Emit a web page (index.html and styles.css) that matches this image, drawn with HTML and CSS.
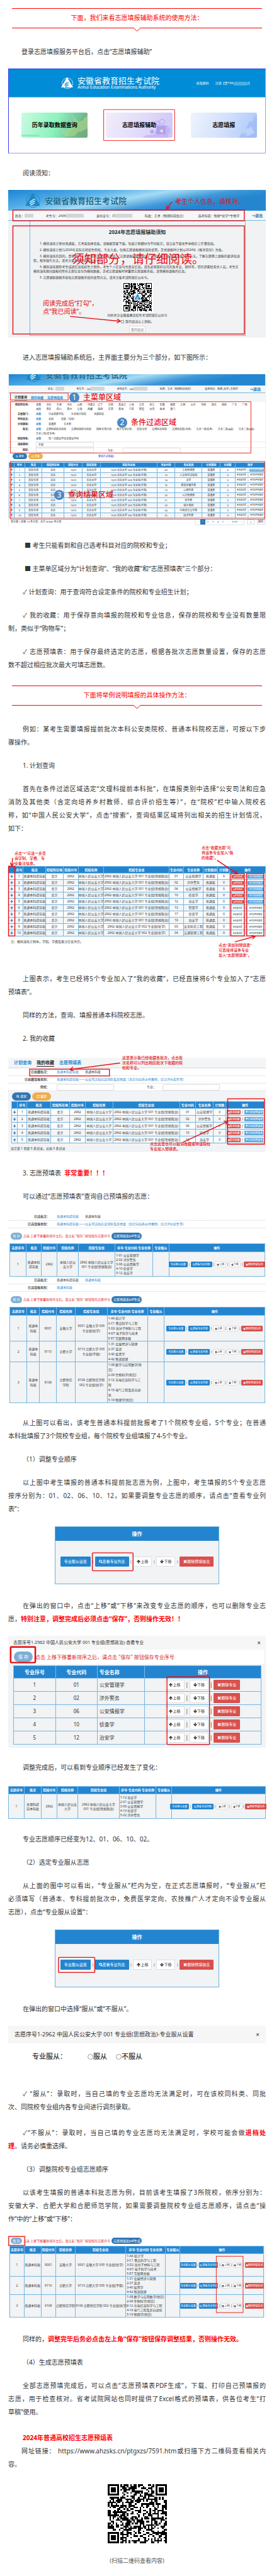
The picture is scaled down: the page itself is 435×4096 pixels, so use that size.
FILE: index.html
```html
<!DOCTYPE html>
<html lang="zh-CN">
<head>
    <meta charset="UTF-8">
    <meta name="viewport" content="width=device-width, initial-scale=1.0">
    <title>志愿填报辅助系统使用方法</title>
    <link rel="stylesheet" href="styles.css">
</head>
<body>
    <svg class="defs" width="0" height="0" aria-hidden="true">
        <symbol id="logo" viewBox="0 0 40 40">
            <circle cx="21" cy="21" r="17" fill="none" stroke="currentColor" stroke-width="1.5"/>
            <path d="M20 1 39 34H1Z" fill="currentColor" stroke="none"/>
            <path d="M12 24c5 0 6-7 14-7M12 28c6 0 7-6 14-6M14 32c5 0 6-5 11-5" fill="none" stroke-width="2.4"/>
        </symbol>
        <symbol id="chevron" viewBox="0 0 11 6">
            <path d="M0 .5 5.5 5.5 11 .5" fill="none" stroke="#ff0000"/>
        </symbol>
        <symbol id="up" viewBox="0 0 10 10"><path d="M5 0 10 5.5 8.6 7 6.2 4.6V10H3.8V4.6L1.4 7 0 5.5Z" fill="currentColor"/></symbol>
        <symbol id="down" viewBox="0 0 10 10"><path d="M5 10 0 4.5 1.4 3l2.4 2.4V0h2.4v5.4L8.6 3 10 4.5Z" fill="currentColor"/></symbol>
        <symbol id="search" viewBox="0 0 10 10"><circle cx="4" cy="4" r="3" fill="none" stroke="currentColor" stroke-width="1.8"/><path d="m6.2 6.2 3 3" stroke="currentColor" stroke-width="2"/></symbol>
        <symbol id="refresh" viewBox="0 0 10 10"><path d="M1 4.4A4 4 0 0 1 8 2.4M9 5.6A4 4 0 0 1 2 7.6" fill="none" stroke="currentColor" stroke-width="1.5"/><path d="M9.5.5v3.6H6ZM.5 9.5V5.9H4Z" fill="currentColor"/></symbol>
        <symbol id="cross" viewBox="0 0 10 10"><path d="m1.5 1.5 7 7m0-7-7 7" stroke="currentColor" stroke-width="3"/></symbol>
        <marker id="head" viewBox="0 0 10 10" refX="8" refY="5" markerWidth="5" markerHeight="5" orient="auto">
            <path d="M1 0 9 5 1 10" fill="none" stroke="#e60d12" stroke-width="2"/>
        </marker>
    </svg>

    <main class="article">
        <header class="divider">
            <h2>下面，我们来看志愿填报辅助系统的使用方法：</h2>
            <div class="divider-foot"><i></i><svg><use href="#chevron"/></svg><i></i></div>
        </header>

        <p class="near">登录志愿填报服务平台后，点击“志愿填报辅助”</p>

        <!-- platform home -->
        <figure class="shot portal">
            <div class="portal-head">
                <svg class="portal-logo"><use href="#logo"/></svg>
                <div class="portal-name">
                    <strong>安徽省教育招生考试院</strong>
                    <span>Anhui Education Examinations Authority</span>
                </div>
                <nav><a href="#">修改密码</a><a href="#">注销【贾*34<i class="smudge"></i>】</a></nav>
            </div>
            <div class="portal-cards">
                <button class="card green" type="button">
                    <svg viewBox="0 0 105 41" preserveAspectRatio="none"><path d="M105 0v41H70c8-3 3-9 10-13s6-14 12-16 2-8 13-12Z" fill="#7fae78" opacity=".5"/><path d="M80 0c2 8 8 14 13 14s5-6 12-9v20c-9 8-17 3-20 13-12 3-20 0-22-8 9 0 15-5 20-12Z" fill="#a9d98a" opacity=".6"/><path d="M0 36h28v3H0Z" fill="#7ce0ae" opacity=".6"/></svg>
                    <span>历年录取数据查询</span>
                </button>
                <button class="card violet" type="button">
                    <svg viewBox="0 0 105 41" preserveAspectRatio="none"><path d="M58 41l6-4 12-1 6-14 16-1 5 8-6 12Z" fill="#b9aaf0" opacity=".6"/><rect x="80" y="21" width="15" height="14" rx="1" fill="#a895e8" opacity=".7"/><path d="m85 30 5-3v6Z" fill="#f3ecc9"/><circle cx="89" cy="15" r="4" fill="none" stroke="#c4b4ee" stroke-width="2"/><circle cx="82" cy="17" r="3" fill="none" stroke="#c4b4ee" stroke-width="2"/><circle cx="73" cy="31" r="3" fill="#9f90d8" opacity=".6"/></svg>
                    <span>志愿填报辅助</span>
                </button>
                <button class="card blue" type="button">
                    <svg viewBox="0 0 105 41" preserveAspectRatio="none"><path d="m76 41 4-7 5 1 2-9 6-12 4 2 3-9 5-2v36Z" fill="#98b8f4" opacity=".6"/><path d="m84 28 12-5 5 10-12 6Z" fill="#bcd2fb"/></svg>
                    <span>志愿填报</span>
                </button>
            </div>
            <svg class="marks" viewBox="46 405 1473 503" preserveAspectRatio="none"><rect x="591" y="648" width="408" height="186" rx="3"/></svg>
        </figure>

        <p>阅读须知：</p>

        <!-- notice page -->
        <figure class="shot notice">
            <div class="banner">
                <svg class="banner-logo"><use href="#logo"/></svg>
                <strong>安徽省教育招生考试院</strong>
            </div>
            <div class="info">
                <span>姓名：<i class="smudge"></i></span>
                <span>考生号：2434<i class="smudge wide"></i></span>
                <span>身份证号：3<i class="smudge wide"></i></span>
                <span>科类：艺术（物理科目组合）</span>
                <span>选考科目：物理+化学+生物学</span>
                <a href="#">↪退出</a>
            </div>
            <div class="notice-body">
                <h3>2024年志愿填报辅助须知</h3>
                <p>1. 模拟演练计划分普通类、艺术类和体育类，请根据需要下载。每类计划细分为不同批次，请点击下载文件中相应工作簿查阅。</p>
                <p>2. 模拟演练计划与2024年实际在皖招生院校、专业大类，仅供志愿填报模拟演练使用，正式填报时计划以2024年《报考指导》为准。</p>
                <p>3. 模拟演练的目的，是帮助广大考生熟悉志愿填报系统，“志愿填报辅助系统”和“志愿填报系统”的界面和操作方法，了解志愿网上填报的要求和流程，相关操作方法，请关注省考试院微信公众号。</p>
                <p>4. 模拟演练期除考生成绩信息和招生计划外，考生个人信息均为真实信息。请务必保管好自己的准考证、密码等，切勿泄露给无关人员。考生在模拟演练期间填报的所有志愿信息均为模拟数据，正式志愿填报时将重置志愿填报系统，清零模拟填报的信息。</p>
                <p>5. 志愿辅助填报系统和志愿填报系统的使用方法，请关注省考试院微信公众号。</p>
                <div class="notice-foot">
                    <div class="qr-card">
                        <svg class="qr" data-size="33" data-seed="7" aria-label="二维码"></svg>
                        <svg class="qr-logo"><use href="#logo"/></svg>
                    </div>
                    <span>扫码关注安徽省教育招生考试院微信公众号</span>
                    <label><input type="checkbox"> 我已阅读以上须知。</label>
                    <button type="button">我已阅读</button>
                </div>
            </div>
            <svg class="marks bold" viewBox="46 72 1473 876" preserveAspectRatio="none">
                <rect x="73" y="191" width="1323" height="64"/>
                <rect x="73" y="285" width="1323" height="641"/>
                <path d="M983 142 953 183" marker-end="url(#head)"/>
                <path d="M400 822 685 850" marker-end="url(#head)"/>
            </svg>
            <p class="note note-10 at-info">考生个人信息，请核对。</p>
            <p class="note note-19 at-rules">须知部分，请仔细阅读。</p>
            <p class="note note-10 at-check">阅读完成后“打勾”，<br>点“我已阅读”。</p>
        </figure>

        <p>进入志愿填报辅助系统后，主界面主要分为三个部分，如下图所示：</p>

        <!-- main screen: menu, filters, results -->
        <figure class="shot system">
            <div class="banner cropped">
                <svg class="banner-logo"><use href="#logo"/></svg>
                <strong>安徽省教育招生考试院</strong>
            </div>
            <div class="info small">
                <span>姓名：<i class="smudge"></i></span>
                <span>考生号：243<i class="smudge wide"></i></span>
                <span>身份证号：342<i class="smudge wide"></i></span>
                <span>科类：艺术（物理科目组合）</span>
                <span>选考科目：物理+化学+生物学</span>
                <a href="#">↪退出</a>
            </div>
            <nav class="tabs small"><a class="on" href="#">计划查询</a><a href="#">我的收藏</a><a href="#">志愿预填表</a></nav>
            <dl class="filters">
                <dt>院校所在地：</dt><dd class="regions" id="regions"></dd>
                <dt>主管部门：</dt><dd><a class="on" href="#">全部</a><a href="#">中央部委学校</a><a href="#">外省地方院校</a><a href="#">省属院校</a></dd>
                <dt>学历层次：</dt><dd><a class="on" href="#">全部</a><a href="#">本科</a><a href="#">高职（专科）</a></dd>
                <dt>计划类别：</dt><dd><a class="on" href="#">全部</a><a href="#">普通类</a><a href="#">艺术类</a></dd>
                <dt>批次：</dt><dd class="tight"><a class="on" href="#">全部</a><a href="#">文理科提前本科批</a><a href="#">文理科提前专科批</a><a href="#">国家专项计划</a><a href="#">地方专项计划</a><a href="#">高校专项</a><a href="#">文理科本科批</a><a href="#">文理科高职(专科)</a><a href="#">艺术一批(校考)</a><a href="#">艺术二批(A段)</a><a href="#">艺术二批(B段)</a><a href="#">艺术三批(高专等)</a></dd>
                <dt>院校特色：</dt><dd><a class="on" href="#">全部</a><a href="#">双一流建设学校及建设学科</a></dd>
                <dt class="field"><label for="kind">填报类别：</label></dt><dd class="field"><select id="kind"><option>不限</option></select></dd>
                <dt class="field"><label for="school">院校：</label></dt><dd class="field"><input id="school" type="text"><label class="second-label" for="major">专业：</label><input id="major" type="text"></dd>
            </dl>
            <div class="actions small"><button class="pill navy" type="button"><svg class="icon"><use href="#search"/></svg> 搜索</button><button class="pill orange" type="button"><svg class="icon"><use href="#refresh"/></svg> 重置</button><a href="#">查询方式收起^</a></div>
            <table class="data plan" id="plan"></table>
            <div class="pager">
                <span>显示第 1 到第 10 条记录，总共 30342 条记录</span>
                <nav><a href="#">‹</a><a class="on" href="#">1</a><a href="#">2</a><a href="#">3</a><a href="#">4</a><a href="#">5</a><a href="#">...</a><a href="#">3035</a><a href="#">›</a></nav>
                <input type="text" value="1" aria-label="页码"><button type="button">跳转</button>
            </div>
            <svg class="marks" viewBox="46 144 1473 904" preserveAspectRatio="none">
                <rect x="55" y="256" width="332" height="42"/>
                <rect x="55" y="308" width="1382" height="306"/>
                <rect x="56" y="664" width="1460" height="344"/>
            </svg>
            <p class="note note-12 at-menu"><b>1</b>主菜单区域</p>
            <p class="note note-12 at-filter"><b>2</b>条件过滤区域</p>
            <p class="note note-12 at-result"><b>3</b>查询结果区域</p>
        </figure>

        <p class="bullet">■ 考生只能看到和自己选考科目对应的院校和专业；</p>
        <p class="bullet">■ 主菜单区域分为“计划查询”、“我的收藏”和“志愿预填表”三个部分：</p>
        <p>✓ 计划查询：用于查询符合设定条件的院校和专业招生计划；</p>
        <p><span class="line">✓ 我的收藏：用于保存意向填报的院校和专业信息，保存的院校和专业没有数量限</span><span class="line">制，类似于“购物车”；</span></p>
        <p><span class="line">✓ 志愿预填表：用于保存最终选定的志愿，根据各批次志愿数量设置，保存的志愿</span><span class="line">数不超过相应批次最大可填志愿数。</span></p>

        <header class="divider">
            <h2>下面将举例说明填报的具体操作方法：</h2>
            <div class="divider-foot"><i></i><svg><use href="#chevron"/></svg><i></i></div>
        </header>

        <p><span class="line">例如：某考生需要填报提前批次本科公安类院校、普通本科院校志愿，可按以下步</span><span class="line">骤操作。</span></p>
        <p>1. 计划查询</p>
        <p><span class="line">首先在条件过滤区域选定“文理科提前本科批”，在填报类别中选择“公安司法和应急</span><span class="line">消防及其他类（含定向培养乡村教师、综合评价招生等）”，在“院校”栏中输入院校名</span><span class="line">称，如“中国人民公安大学”，点击“搜索”，查询结果区域将列出相关的招生计划情况，</span><span class="line">如下：</span></p>

        <!-- search results -->
        <figure class="shot results">
            <table class="data" id="results"></table>
            <p class="remark">注：模拟演练计划中，学制、学费及备注信息为空。</p>
            <svg class="marks bold" viewBox="46 460 1473 674" preserveAspectRatio="none">
                <rect x="48" y="584" width="36" height="413"/>
                <rect x="1319" y="628" width="77" height="369"/>
                <rect x="1410" y="628" width="98" height="369"/>
                <path d="M71 536 67 580" marker-end="url(#head)"/>
                <path d="M1240 549 1355 628" marker-end="url(#head)"/>
                <path d="M1342 1032 1456 1000" marker-end="url(#head)"/>
            </svg>
            <p class="note note-6 at-plus">点击“+”可进一步查<br>询学制、学费、专<br>业备注信息。</p>
            <p class="note note-6 at-fav">点击“收藏志愿”可<br>将该条专业加入“我<br>的收藏”。</p>
            <p class="note note-6 at-add">点击“添加到预填表”<br>可直接将该条专业<br>加入“志愿预填表”。</p>
        </figure>

        <p><span class="line">上图表示，考生已经将5个专业加入了“我的收藏”，已经直接将6个专业加入了“志愿</span><span class="line">预填表”。</span></p>
        <p>同样的方法，查询、填报普通本科院校志愿。</p>
        <p>2. 我的收藏</p>

        <!-- favourites -->
        <figure class="shot favourites">
            <nav class="tabs"><a href="#">计划查询</a><a class="on" href="#">我的收藏</a><a href="#">志愿预填表</a></nav>
            <dl class="chosen">
                <dt>已收藏批次：</dt><dd><a class="on" href="#">普通本科提前批</a><a href="#">普通本科批</a></dd>
                <dt>已收藏填报类别：</dt><dd><a class="on" href="#">普通本科提前批——公安司法和应急消防及其他类（含定向培养乡村教师、综合评价招生等）</a></dd>
                <dt><label for="fav-school">院校：</label></dt><dd><input id="fav-school" type="text"><label for="fav-major">专业：</label><input id="fav-major" type="text"></dd>
            </dl>
            <div class="actions"><button class="pill navy" type="button"><svg class="icon"><use href="#search"/></svg> 搜索</button><button class="pill orange" type="button"><svg class="icon"><use href="#refresh"/></svg> 重置</button></div>
            <table class="data" id="favourites"></table>
            <p class="remark">显示第 1 到第 5 条记录，总共 5 条记录</p>
            <svg class="marks bold" viewBox="46 400 1473 548" preserveAspectRatio="none">
                <rect x="169" y="466" width="456" height="39"/>
                <rect x="1301" y="638" width="210" height="264"/>
                <path d="M686 430 402 467" marker-end="url(#head)"/>
                <path d="M1046 890 1299 771" marker-end="url(#head)"/>
            </svg>
            <p class="note note-6 at-batch">这里表示我已经收藏各批次，点击批<br>次名称可以列出相应批次下收藏的院<br>校和专业。</p>
            <p class="note note-6 at-cancel">点击这里也可以取消收藏或将该院校<br>专业加入预填表。</p>
        </figure>

        <p>3. 志愿预填表&nbsp; <strong>非常重要！！！</strong></p>
        <p>可以通过“志愿预填表”查询自己预填报的志愿：</p>

        <!-- prefilled form, both batches -->
        <figure class="shot prefill">
            <dl class="chosen">
                <dt>已选批次：</dt><dd><a class="on" href="#">普通本科提前批</a><a href="#">普通本科批</a></dd>
                <dt>已选填报类别：</dt><dd><a class="on" href="#">普通本科提前批——公安司法和应急消防及其他类（含定向培养乡村教师、综合评价招生等）</a></dd>
            </dl>
            <div class="save-row"><button class="pill pale" type="button">保 存</button><span>点击 上移下移重新排序之后，请点击 "保存" 按钮保存志愿序号</span><button class="pill navy" type="button">志愿预填表pdf生成</button></div>
            <table class="data form early" id="early"></table>
            <dl class="chosen">
                <dt>已选批次：</dt><dd><a href="#">普通本科提前批</a><a class="on" href="#">普通本科批</a></dd>
                <dt>已选填报类别：</dt><dd><a class="on" href="#">普通本科批</a></dd>
            </dl>
            <div class="save-row"><button class="pill pale" type="button">保 存</button><span>点击 上移下移重新排序之后，请点击 "保存" 按钮保存志愿序号</span><button class="pill navy" type="button">志愿预填表pdf生成</button></div>
            <table class="data form regular" id="regular"></table>
        </figure>

        <p><span class="line">从上图可以看出，该考生普通本科提前批报考了1个院校专业组，5个专业；在普通</span><span class="line">本科批填报了3个院校专业组，每个院校专业组填报了4-5个专业。</span></p>
        <p>（1）调整专业顺序</p>
        <p><span class="line">以上图中考生填报的普通本科提前批志愿为例，上图中，考生填报的5个专业志愿</span><span class="line">按序分别为：01、02、06、10、12，如果要调整专业志愿的顺序，请点击“查看专业列</span><span class="line">表”：</span></p>

        <figure class="shot ops">
            <h4>操作</h4>
            <div class="ops-row"></div>
            <svg class="marks bold" viewBox="312 530 940 343" preserveAspectRatio="none"><rect x="524" y="687" width="234" height="108" rx="4"/></svg>
        </figure>

        <p><span class="line">在弹出的窗口中，点击“上移”或“下移”来改变专业志愿的顺序，也可以删除专业志</span><span class="line">愿，<strong>特别注意，调整完成后必须点击“保存”，否则操作无效！！</strong></span></p>

        <!-- major list dialog -->
        <figure class="shot dialog">
            <h4>志愿序号1-2962 中国人民公安大学 001 专业组(思想政治)-查看专业<button type="button" aria-label="关闭">×</button></h4>
            <div class="dialog-save"><button class="pill pale" type="button">保 存</button><span>点击 上移下移重新排序之后，请点击 "保存" 按钮保存专业序号</span></div>
            <table class="data majors" id="majors"></table>
            <svg class="marks bold" viewBox="46 1176 1473 664" preserveAspectRatio="none">
                <rect x="60" y="1242" width="141" height="93" rx="4" stroke-width="9"/>
                <rect x="954" y="1419" width="243" height="402" rx="4"/>
            </svg>
        </figure>

        <p>调整完成后，可以看到专业顺序已经发生了变化：</p>

        <figure class="shot changed"><table class="data form early" id="changed"></table></figure>

        <p>专业志愿顺序已经变为12、01、06、10、02。</p>
        <p>（2）选定专业服从志愿</p>
        <p><span class="line">从上面的图中可以看出，“专业服从”栏内为空，在正式志愿填报时，“专业服从”栏</span><span class="line">必须填写（普通本、专科提前批次中，免费医学定向、农技推广人才定向不设专业服从</span><span class="line">志愿），点击“专业服从设置”：</span></p>

        <figure class="shot ops">
            <h4>操作</h4>
            <div class="ops-row"></div>
            <svg class="marks bold" viewBox="312 218 940 343" preserveAspectRatio="none"><rect x="330" y="383" width="208" height="92" rx="4"/></svg>
        </figure>

        <p>在弹出的窗口中选择“服从”或“不服从”。</p>

        <figure class="shot obey">
            <h4>志愿序号1-2962 中国人民公安大学 001 专业组(思想政治)-专业服从设置<button type="button" aria-label="关闭">×</button></h4>
            <div class="obey-row"><span>专业服从：</span><label><input type="radio" name="obey">服从</label><label><input type="radio" name="obey">不服从</label></div>
        </figure>

        <p><span class="line">✓ “服从”：录取时，当自己填的专业志愿均无法满足时，可在该校同科类、同批</span><span class="line">次、同院校专业组内各专业间进行调剂录取。</span></p>
        <p class="apart"><span class="line">✓“不服从”：录取时，当自己填的专业志愿均无法满足时，学校可能会做<strong>退档处</strong></span><span class="line"><strong>理</strong>。请务必慎重选择。</span></p>
        <p>（3）调整院校专业组志愿顺序</p>
        <p><span class="line">以该考生填报的普通本科批志愿为例，目前该考生填报了3所院校，依序分别为：</span><span class="line">安徽大学、合肥大学和合肥师范学院，如果需要调整院校专业组志愿顺序，请点击“操</span><span class="line">作”中的“上移”或“下移”：</span></p>

        <!-- reordering groups -->
        <figure class="shot reorder">
            <div class="save-row"><button class="pill pale" type="button">保 存</button><span>点击 上移下移重新排序之后，请点击 "保存" 按钮保存志愿序号</span><button class="pill navy" type="button">志愿预填表pdf生成</button></div>
            <table class="data form" id="reorder"></table>
            <svg class="marks" viewBox="46 675 1473 483" preserveAspectRatio="none">
                <rect x="49" y="679" width="92" height="53" stroke-width="6"/>
                <rect x="1236" y="796" width="153" height="333"/>
            </svg>
        </figure>

        <p>同样的，<strong>调整完毕后务必点击左上角“保存”按钮保存调整结果，否则操作无效。</strong></p>
        <p>（4）生成志愿预填表</p>
        <p><span class="line">全部志愿预填完成后，可以点击“志愿预填表PDF生成”，下载、打印自己预填报的</span><span class="line">志愿，用于检查核对。省考试院网站也同时提供了Excel格式的预填表，供各位考生“打</span><span class="line">草稿”使用。</span></p>
        <div class="closing">
            <p><strong>2024年普通高校招生志愿预填表</strong></p>
            <p><span class="line">网址链接： <a href="https://www.ahzsks.cn/ptgxzs/7591.htm">https://www.ahzsks.cn/ptgxzs/7591.htm</a>或扫描下方二维码查看相关内</span><span class="line">容。</span></p>
        </div>
        <svg class="qr qr-big" data-size="37" data-seed="2024" aria-label="二维码"></svg>
        <p class="caption">(扫描二维码查看内容)</p>
    </main>

    <script src="script.js"></script>
</body>
</html>
```

FILE: styles.css
```css
* {
    box-sizing: border-box;
}

body {
    margin: 0;
    background-color: #fff;
    color: #333;
    font-family: "Noto Sans", "Noto Sans CJK SC", "DejaVu Sans", sans-serif;
    font-size: 10px;
    line-height: 21px;
}

a {
    color: inherit;
    text-decoration: none;
}

i {
    font-style: normal;
}

button,
input,
select {
    font-family: inherit;
    color: inherit;
    margin: 0;
    padding: 0;
}

.defs {
    position: absolute;
}

.icon {
    width: 1em;
    height: 1em;
    vertical-align: -1px;
}

.article {
    padding: 13px;
}

.article > p,
.closing p {
    margin: 16px 0;
    text-indent: 23px;
    white-space: nowrap;
}

.article > .near {
    text-indent: 21px;
}

.article > .bullet {
    text-indent: 26px;
}

.article > .apart {
    margin-top: 20px;
}

.article strong {
    color: #ff0000;
}

.line {
    display: block;
    text-align: justify;
    text-align-last: justify;
    white-space: normal;
}

.line + .line {
    text-indent: 0;
}

.line:last-child {
    text-align-last: left;
}

/* red title between two rules */
.divider {
    margin: 22px 6px 22px;
    border-top: 1px solid #ff0000;
    color: #ff0000;
}

.divider:first-child {
    margin-top: 0;
}

.divider h2 {
    margin: 0;
    padding: 4px 0 5px;
    font-size: 10px;
    font-weight: normal;
    text-align: center;
}

.divider-foot {
    display: flex;
}

.divider-foot i {
    flex: 1;
    border-top: 1px solid #ff0000;
}

.divider-foot svg {
    width: 11px;
    height: 6px;
}

/* screens */
.shot {
    position: relative;
    margin: 16px 0 21px;
    font-size: 5px;
    line-height: 8px;
}

.shot button {
    line-height: inherit;
}

.marks {
    position: absolute;
    top: 0;
    left: 0;
    width: 100%;
    height: 100%;
    fill: none;
    stroke: #ee3b30;
    stroke-width: 4;
    overflow: visible;
}

.marks.bold {
    stroke: #e60d12;
    stroke-width: 5;
}

.note {
    position: absolute;
    margin: 0;
    color: #e60d12;
    white-space: nowrap;
}

.note-6 {
    font-size: 6px;
    font-weight: 500;
    line-height: 8px;
}

.note-10 {
    font-size: 10px;
    line-height: 13px;
}

.note-12 {
    display: flex;
    align-items: center;
    gap: 6px;
    font-size: 12px;
    line-height: 16px;
    font-weight: 500;
}

.note-12 b {
    width: 16px;
    border-radius: 8px;
    background-color: #4e88c4;
    color: #fff;
    font-weight: normal;
    text-align: center;
}

.note-19 {
    font-size: 19px;
    line-height: 24px;
}

.at-info { left: 265px; top: 12px; }
.at-rules { left: 102px; top: 98px; }
.at-check { left: 55px; top: 174px; }
.at-menu { left: 96px; top: 29px; }
.at-filter { left: 172px; top: 69px; }
.at-result { left: 72px; top: 184px; }
.at-plus { left: 10px; top: 9px; }
.at-fav { left: 307px; top: 0; }
.at-add { left: 334px; top: 155px; }
.at-batch { left: 181px; top: -4px; }
.at-cancel { left: 225px; top: 133px; }

.smudge {
    display: inline-block;
    width: 14px;
    height: 6px;
    background-color: #d3d6d9;
    vertical-align: middle;
}

.smudge.wide {
    width: 29px;
}

/* platform home */
.portal {
    border: 1px solid #9a9aee;
    border-top-color: #1f3cf0;
    border-left-color: #3a3af0;
    background-color: #fff;
}

.portal-head {
    display: flex;
    align-items: center;
    height: 45px;
    padding: 0 22px 0 82px;
    background-color: #008cd7;
    border-bottom: 1px solid #5fb6e4;
    color: #fff;
}

.portal-logo {
    width: 21px;
    height: 20px;
    margin-right: 6px;
    stroke: #008cd7;
}

.portal-name {
    flex: 1;
}

.portal-name strong {
    display: block;
    color: #fff;
    font-size: 13px;
    font-weight: normal;
    line-height: 13px;
}

.portal-name span {
    display: block;
    font-family: "Liberation Sans", sans-serif;
    font-size: 7px;
    line-height: 8px;
    white-space: nowrap;
}

.portal-head nav {
    display: flex;
    gap: 10px;
    white-space: nowrap;
}

.portal-head .smudge {
    background-color: #4aaee2;
    width: 24px;
    border-radius: 3px;
}

.portal-cards {
    display: grid;
    grid-template-columns: repeat(3, 1fr);
    gap: 29px;
    padding: 24px 13px 24px 20px;
}

.card {
    position: relative;
    height: 40px;
    border: 0;
    border-radius: 3px;
    overflow: hidden;
    color: #000;
    font-size: 9px;
    font-weight: bold;
}

.card svg {
    position: absolute;
    top: 0;
    left: 0;
    width: 100%;
    height: 100%;
}

.card span {
    position: relative;
}

.card.green { background: linear-gradient(110deg, #c9fbe3, #8df3bd 50%, #5fa283); }
.card.violet { background: linear-gradient(110deg, #f1eefb, #e2dcf9 50%, #cfc6f6); }
.card.blue { background: linear-gradient(110deg, #eef3fd, #d3e1fc 50%, #a9c6fa); }

/* blue site header */
.banner {
    display: flex;
    align-items: center;
    gap: 6px;
    height: 33px;
    padding-left: 26px;
    background: linear-gradient(170deg, #1b84d4 0%, #56b0e8 28%, #a5dbf5 45%, #3f98d9 62%, #2586d0 75%);
}

.banner-logo {
    width: 26px;
    height: 25px;
    color: #1c86c6;
    stroke: #d8f0fb;
}

.article .banner strong {
    color: #12688f;
    font-size: 13px;
    line-height: 16px;
    text-shadow: 0 0 1px #fff;
}

.banner.cropped {
    height: 18px;
    align-items: flex-end;
    overflow: hidden;
    padding-bottom: 5px;
}

.banner.cropped strong {
    line-height: 18px;
    padding-bottom: 3px;
}

.info {
    display: flex;
    justify-content: space-between;
    align-items: center;
    height: 16px;
    padding: 0 5px 0 11px;
    background-color: #f5f7f8;
    border-bottom: 1px solid #7ab8dc;
    white-space: nowrap;
}

.info a {
    color: #1f6fb2;
    font-size: 6px;
    font-weight: bold;
}

.info.small {
    height: 12px;
    padding: 0 7px 0 62px;
    font-size: 4px;
}

.info.small .smudge.wide {
    width: 22px;
}

.notice {
    background-color: #f0f2f4;
    padding-bottom: 3px;
}

.notice-body {
    margin: 0 32px 0 34px;
    padding: 12px 6px 4px 5px;
    border: 1px solid #7ab8dc;
    border-top: 0;
}

.notice-body h3 {
    margin: 0 0 9px;
    font-size: 8px;
    line-height: 12px;
    text-align: center;
}

.notice-body > p {
    margin: 0 0 3px;
    line-height: 7px;
    text-indent: 10px;
}

.notice-foot {
    display: flex;
    flex-direction: column;
    align-items: center;
    white-space: nowrap;
}

.notice-foot label {
    display: flex;
    align-items: center;
    gap: 2px;
    margin: 2px 0;
}

.notice-foot input {
    appearance: none;
    width: 5px;
    height: 5px;
    border: 1px solid #999;
    background-color: #fff;
}

.notice-foot button {
    width: 26px;
    height: 11px;
    margin-top: 1px;
    border: 1px solid #ddd;
    border-radius: 1px;
    background-color: #fcfcfc;
    color: #777;
    font-size: 5px;
}

.qr-card {
    position: relative;
    padding: 2px;
    background-color: #fff;
    line-height: 0;
}

.qr-card .qr {
    width: 45px;
    height: 45px;
}

.qr-logo {
    position: absolute;
    top: 19px;
    left: 19px;
    width: 11px;
    height: 11px;
    background-color: #fff;
    color: #1c86c6;
    stroke: #fff;
}

/* tabs, filters, buttons */
.tabs {
    display: flex;
    align-items: center;
    gap: 8px;
    height: 15px;
    padding-left: 9px;
    background-color: #f3f5f6;
    color: #2385d0;
    font-size: 7px;
    font-weight: bold;
    line-height: 11px;
}

.tabs .on {
    color: #222;
    border-bottom: 1px solid #222;
}

.tabs.small {
    height: 14px;
    gap: 6px;
    font-size: 5px;
    line-height: 9px;
}

.system {
    background-color: #fff;
    border: solid #eef1f4;
    border-width: 0 1px;
}

.filters {
    display: grid;
    grid-template-columns: 34px 1fr;
    column-gap: 9px;
    margin: 1px 0 0;
    font-size: 4px;
    line-height: 7px;
}

.filters dt {
    text-align: right;
    font-weight: bold;
    white-space: nowrap;
    padding-bottom: 1px;
}

.filters dd {
    display: flex;
    flex-wrap: wrap;
    column-gap: 12px;
    margin: 0;
    padding-bottom: 1px;
}

.filters .on {
    color: #2385d0;
    font-weight: bold;
}

.filters .regions {
    display: grid;
    grid-template-columns: repeat(21, 1fr);
    column-gap: 0;
    padding-right: 20px;
    white-space: nowrap;
}

.filters .tight {
    column-gap: 8px;
    padding-right: 10px;
}

.filters .field {
    height: 9px;
    padding: 0;
    border-top: 1px dotted #ddd;
    align-items: center;
}

.filters input,
.filters select {
    appearance: none;
    width: 92px;
    height: 8px;
    border: 1px solid #e3e3e3;
    background-color: #fff;
    font-size: 4px;
    padding-left: 3px;
}

.filters .second-label {
    margin-left: 10px;
}

.actions {
    display: flex;
    align-items: center;
    gap: 2px;
    height: 16px;
    padding-left: 6px;
}

.pill {
    border: 0;
    border-radius: 8px;
    color: #fff;
    font-size: 5px;
    white-space: nowrap;
}

.pill.navy { background-color: #3177b6; }
.pill.orange { background-color: #f0ad4e; }
.pill.pale { background-color: #7faed4; }

.actions .pill {
    width: 30px;
    height: 13px;
}

.actions.small {
    height: 15px;
    padding-bottom: 4px;
    font-size: 4px;
    color: #2222cc;
}

.actions.small .pill {
    width: 23px;
    height: 9px;
    font-size: 4px;
}

.actions.small a {
    margin-left: 86px;
}

/* data tables */
.data {
    width: 100%;
    table-layout: fixed;
    border-collapse: collapse;
    font-size: 5px;
    line-height: 7px;
    text-align: center;
    background-color: #f3f6f9;
}

.data th,
.data td {
    padding: 0;
    border: 1px solid #77b6de;
    white-space: nowrap;
}

.data th {
    background-color: #2385d0;
    border-color: #7cbbe6;
    color: #fff;
}

.data tbody tr:nth-child(odd) {
    background-color: #fbfcfd;
}

.data .plus {
    color: #1f6fb2;
    font-weight: bold;
}

.data button,
.ops-row button {
    border: 1px solid #ddd;
    border-radius: 1px;
    background-color: #fff;
    color: #333;
    white-space: nowrap;
}

.data .b-blue,
.ops-row .b-blue {
    background-color: #2385d0;
    border-color: #2385d0;
    color: #fff;
}

.data .b-sky {
    background-color: #5aa5dc;
    border-color: #5aa5dc;
    color: #fff;
}

.data .b-red,
.ops-row .b-red {
    background-color: #d9504c;
    border-color: #d9504c;
    color: #fff;
}

.ops-cell {
    display: flex;
    justify-content: center;
    align-items: center;
    gap: 2px;
}

.data.plan {
    font-size: 4px;
    line-height: 6px;
}

.plan tr {
    height: 8px;
}

.plan .ops-cell {
    gap: 1px;
}

.plan .ops-cell button,
#results .ops-cell button {
    height: 5px;
    border-width: 0;
    font-size: 3px;
    line-height: 5px;
    padding: 0 1px;
}

.pager {
    display: flex;
    align-items: center;
    gap: 4px;
    height: 12px;
    padding: 0 1px 0 3px;
    font-size: 4px;
}

.pager span {
    flex: 1;
}

.pager nav {
    display: flex;
    border: 1px solid #e3e3e3;
    color: #2385d0;
}

.pager nav a {
    min-width: 8px;
    padding: 0 2px;
    text-align: center;
}

.pager .on {
    background-color: #2d76b6;
    color: #fff;
}

.pager input,
.pager button {
    width: 12px;
    height: 8px;
    border: 1px solid #ddd;
    background-color: #fff;
    font-size: 4px;
    line-height: 6px;
    text-align: center;
}

.results {
    padding: 33px 0 24px;
}

#results thead tr {
    height: 11px;
}

#results tbody tr {
    height: 10px;
}

#results .ops-cell button {
    height: 6px;
    line-height: 6px;
    padding: 0 2px;
}

.remark {
    margin: 4px 4px 0;
}

/* favourites and prefilled form */
.favourites {
    margin-top: 20px;
    margin-bottom: 23px;
    background-color: #f1f3f6;
    padding-bottom: 2px;
}

.chosen {
    display: grid;
    grid-template-columns: 66px 1fr;
    margin: 0;
    background-color: #fff;
    line-height: 11px;
}

.chosen dt,
.chosen dd {
    margin: 0;
    border-bottom: 1px dotted #ccd3da;
    white-space: nowrap;
}

.chosen dt {
    text-align: right;
    font-weight: 500;
}

.chosen dd {
    display: flex;
    align-items: center;
    gap: 10px;
    padding-left: 11px;
}

.chosen .on {
    color: #2385d0;
}

.favourites .chosen {
    border-top: 2px solid #e6e9ec;
}

.chosen input {
    width: 91px;
    height: 10px;
    border: 1px solid #ddd;
    border-radius: 1px;
    background-color: #fff;
}

.chosen dd label {
    margin-left: 42px;
}

.favourites .data {
    width: calc(100% - 7px);
    margin-left: 5px;
}

.favourites .data tr {
    height: 11px;
}

.favourites .ops-cell button {
    height: 7px;
    border-width: 0;
    font-size: 4px;
    line-height: 7px;
    padding: 0 1px;
}

.save-row {
    display: flex;
    align-items: center;
    gap: 2px;
    height: 24px;
    padding-left: 4px;
    color: #e60d12;
    white-space: nowrap;
}

.save-row .pill {
    height: 11px;
    padding: 0 3px;
}

.save-row .pale {
    width: 18px;
}

.save-row .navy {
    width: 48px;
}

.form td:nth-child(6) {
    text-align: left;
    padding-left: 1px;
}

.form thead tr {
    height: 13px;
}

.form tbody tr,
.form tbody tr:nth-child(odd) {
    background-color: #f1f3f5;
}

.prefill .form {
    width: calc(100% - 3px);
    margin-left: 2px;
}

.form .ops-cell {
    gap: 1px;
}

.form .ops-cell button {
    height: 9px;
    font-size: 4px;
    line-height: 7px;
    padding: 0 2px;
}

.early td {
    padding: 2px 0 1px;
}

.regular td {
    line-height: 8px;
}

.changed {
    margin-top: 19px;
    margin-bottom: 22px;
}

.changed .form thead tr {
    height: 12px;
}

/* enlarged operation cell */
.ops {
    width: 64%;
    margin: 17px auto 24px;
    border: 1px solid #6eb0da;
    background-color: #f1f3f5;
}

.ops h4 {
    margin: 0;
    background-color: #2385d0;
    color: #fff;
    font-size: 8px;
    line-height: 22px;
    text-align: center;
}

.ops-row {
    display: flex;
    justify-content: space-between;
    align-items: center;
    padding: 25px 8px 27px;
    font-size: 6px;
}

.ops-row button {
    height: 16px;
    padding: 0 5px;
    font-size: 6px;
}

/* dialogs */
.dialog {
    background-color: #f1f3f5;
    padding-bottom: 5px;
}

.dialog h4,
.obey h4 {
    display: flex;
    justify-content: space-between;
    align-items: center;
    margin: 0;
    padding: 0 8px;
    background-color: #f6f6f6;
    font-size: 7px;
    font-weight: normal;
    line-height: 22px;
}

.dialog h4 button,
.obey h4 button {
    border: 0;
    background: none;
    font-size: 10px;
}

.dialog-save {
    display: flex;
    align-items: center;
    gap: 4px;
    height: 23px;
    margin: 0 2px 2px;
    padding-left: 7px;
    background-color: #fff;
    color: #d9201f;
    font-size: 8px;
}

.dialog-save .pill {
    width: 30px;
    height: 17px;
    border-radius: 9px;
    font-size: 7px;
}

.majors {
    width: calc(100% - 15px);
    margin-left: 8px;
    font-size: 8px;
    line-height: 12px;
}

.majors thead tr {
    height: 20px;
}

.majors tbody tr,
.majors tbody tr:nth-child(odd) {
    height: 21px;
    background-color: #f1f3f5;
}

.majors th:nth-child(3),
.majors td:nth-child(3) {
    text-align: left;
    padding-left: 3px;
}

.majors .ops-cell button {
    height: 16px;
    padding: 0 5px;
    font-size: 6px;
}

.obey {
    padding-bottom: 20px;
}

.obey h4 {
    padding: 0 10px;
    font-size: 9px;
    line-height: 28px;
}

.obey-row {
    display: flex;
    align-items: center;
    gap: 14px;
    padding: 13px 0 0 38px;
    font-size: 11px;
    font-weight: 500;
    line-height: 16px;
}

.obey-row span {
    width: 74px;
}

.obey-row label {
    display: flex;
    align-items: center;
}

.obey-row input {
    appearance: none;
    width: 9px;
    height: 9px;
    border: 1px solid #999;
    border-radius: 5px;
}

.reorder {
    margin-bottom: 24px;
    background-color: #f6f7f8;
}

.reorder .save-row {
    height: 16px;
    background-color: #fff;
}

.reorder .save-row .pill {
    height: 10px;
}

.reorder .form {
    width: calc(100% - 5px);
    margin-left: 2px;
}

.reorder .form thead tr {
    height: 12px;
}

.reorder .ops-cell button {
    padding: 0;
}

/* closing block */
.closing {
    margin-top: 20px;
}

.closing p {
    margin: 0;
}

.closing p + p {
    text-indent: 21px;
}

.qr-big {
    display: block;
    width: 94px;
    height: 94px;
    margin: 21px auto 17px;
}

.article > .caption {
    margin: 0;
    text-indent: 0;
    text-align: center;
    font-size: 9px;
    color: #555;
}
```

FILE: script.js
```javascript
function icon(name) {
    return `<svg class="icon"><use href="#${name}"/></svg>`;
}

function button(text, cls) {
    return `<button type="button" class="${cls || ''}">${text}</button>`;
}

const up = button(icon('up') + '上移');
const down = button(icon('down') + '下移');
const fav = button('✚收藏志愿');
const unfav = button(icon('cross') + '取消收藏', 'b-red');

function fillTable(id, widths, head, rows) {
    const cols = widths.map(w => `<col style="width:${w}%">`).join('');
    const ths = head.map(h => `<th scope="col">${h}</th>`).join('');
    const trs = rows.map(r => '<tr>' + r.map(c => `<td>${c}</td>`).join('') + '</tr>').join('');
    document.getElementById(id).innerHTML =
        `<colgroup>${cols}</colgroup><thead><tr>${ths}</tr></thead><tbody>${trs}</tbody>`;
}

function ops(list) {
    return `<div class="ops-cell">${list.join('<i>|</i>')}</div>`;
}

const plus = '<span class="plus">✚</span>';

// regions in the filter
const regions = '全部 北京 天津 河北 山西 内蒙古 辽宁 吉林 黑龙江 上海 江苏 浙江 安徽 福建 江西 山东 河南 湖北 湖南 广东 广西 海南 重庆 四川 贵州 云南 西藏 陕西 甘肃 青海 宁夏 新疆 台湾 香港 澳门';
document.getElementById('regions').innerHTML = regions.split(' ')
    .map((r, i) => `<a href="#" class="${i ? '' : 'on'}">${r}</a>`).join('');

// plan list
const planMajors = [
    ['09', '工商管理类'], ['10', '人文科学试验班'], ['14', '法学'], ['16', '新闻传播学类'], ['19', '心理学类'],
    ['20', '公共管理类'], ['21', '哲学类'], ['23', '城乡规划'], ['24', '中国语言文学类'], ['25', '经济学类']
];
fillTable('plan', [1.9, 4.3, 6.6, 8.7, 7.2, 7, 22.2, 6.9, 10.7, 7.1, 5.8, 11.6],
    ['', '序号', '批次', '院校所在地', '院校代号', '院校名称', '院校专业组', '专业代码', '专业名称', '计划类别', '计划数', '操作'],
    planMajors.map((m, i) => [plus, i + 1, '高校专项', '北京', '1029', '北京大学', '1029 北京大学 003 专业组(不限)', m[0], m[1], '普通类', 0,
        ops([fav, button('✚添加到预填表', i ? '' : 'b-sky')])]));

// results for one university
const found = [
    ['01', '公安管理学'], ['02', '涉外警务'], ['06', '公安情报学'], ['10', '侦查学'], ['12', '治安学'],
    ['13', '犯罪学'], ['17', '侦查学'], ['19', '治安学'], ['03', '安全防范工程'], ['04', '交通管理工程']
];
const uni = '中国人民公安大学';
const group = '2962 中国人民公安大学 001 专业组(思想政治)';
fillTable('results', [2.5, 3.2, 8.8, 6.8, 5.8, 10, 25.4, 5.6, 7.7, 5.7, 4.6, 13.9],
    ['', '序号', '批次', '院校所在地', '院校代号', '院校名称', '院校专业组', '专业代码', '专业名称', '计划类别', '计划数', '操作'],
    found.map((m, i) => [plus, i + 1, '普通本科提前批', '北京', '2962', uni,
        i < 8 ? group : '2962 中国人民公安大学 002 专业组(化学)', m[0], m[1], '普通类', 0,
        ops(i < 5 ? [unfav, button('✚已添加预填表', 'b-sky')] : [fav, button('✚添加到预填表')])]));

fillTable('favourites', [2.3, 3.7, 9.4, 7.6, 6.1, 11, 26.4, 6.3, 7.1, 4.9, 15.2],
    ['', '序号', '批次', '院校所在地', '院校代号', '院校名称', '院校专业组', '专业代码', '专业名称', '计划数', '操作'],
    found.slice(0, 5).map((m, i) => [plus, i + 1, '普通本科提前批', '北京', '2962', uni, group, m[0], m[1], 0,
        ops([unfav, button('✚已添加预填表', 'b-sky')])]));

// prefilled forms
const formHead = ['志愿序号', '批次', '院校代号', '院校名称', '院校专业组', '序号-专业代码 专业名称', '专业服从', '操作'];
const formButtons = [
    button('专业服从设置', 'b-blue'),
    button(icon('search') + '查看专业列表', 'b-blue'),
    up,
    down,
    button(icon('cross') + '删除预填信息', 'b-red')
];
const formOps = ops(formButtons);

document.querySelectorAll('.ops-row').forEach(row => {
    row.innerHTML = formButtons.join('<i>|</i>');
});

fillTable('early', [6.4, 6, 6.2, 8.2, 14.5, 14.7, 6.4, 37.6], formHead, [
    [1, '普通本科<br>提前批', '2962', '中国人民公<br>安大学', '2962 中国人民公安大学<br>001 专业组(思想政治)',
        '1-01 公安管理学<br>2-02 涉外警务<br>3-06 公安情报学<br>4-10 侦查学<br>5-12 治安学', '', formOps]
]);

fillTable('changed', [6.1, 6.7, 6.1, 8.1, 16.1, 14.3, 6, 36.6], formHead, [
    [1, '文理科提<br>前本科批', '2962', '中国人民公安<br>大学', '2962 中国人民公安大学<br>001 专业组(思想政治)',
        '1-12 治安学<br>2-01 公安管理学<br>3-06 公安情报学<br>4-10 侦查学<br>5-02 涉外警务', '', formOps]
]);

const ahu = '1-A6 统计学<br>2-C1 食品科学与工程<br>3-D2 高分子材料与工程<br>4-D7 电子科学与技术<br>5-E7 互联网金融';
const hfu = '1-31 会展经济与管理<br>2-37 英语<br>3-40 投资学<br>4-42 物流管理';

fillTable('regular', [6.7, 5, 6.6, 7.4, 12.5, 15.8, 6.6, 39.4], formHead, [
    [1, '普通本<br>科批', '9001', '安徽大学', '9001 安徽大学 005<br>专业组(化学)', ahu, '', formOps],
    [2, '普通本<br>科批', '9110', '合肥大学', '9110 合肥大学 005<br>专业组(不限)', hfu, '', formOps],
    [3, '普通本<br>科批', '9109', '合肥师范<br>学院', '9109 合肥师范学院<br>002 专业组(化学)',
        '1-08 数学与应用数学(师<br>范)<br>2-09 生物科学(师范)<br>3-12 光电信息科学与工<br>程<br>4-16 电气工程及其自动<br>化<br>5-19 物理学(师范)', '', formOps]
]);

fillTable('reorder', [5.7, 6.6, 5.8, 7.7, 19.9, 15.6, 5.8, 32.9], formHead, [
    [1, '普通本科批', '9001', '安徽大学', '9001 安徽大学 005 专业组(化学)', ahu, '', formOps],
    [2, '普通本科批', '9110', '合肥大学', '9110 合肥大学 005 专业组(不限)', hfu, '', formOps],
    [3, '普通本科批', '9109', '合肥师范学院', '9109 合肥师范学院 002 专业组(化学)',
        '1-08 数学与应用数学(师范)<br>2-09 生物科学(师范)<br>3-12 光电信息科学与工程<br>4-16 电气工程及其自动化<br>5-19 物理学(师范)', '', formOps]
]);

fillTable('majors', [17, 16.8, 19.1, 47.1], ['专业序号', '专业代码', '专业名称', '操作'],
    found.slice(0, 5).map((m, i) => [i + 1, m[0], m[1], ops([up, down, button(icon('cross') + '删除专业', 'b-red')])]));

// qr codes
function finder(x, y, n) {
    const spots = [[0, 0], [n - 7, 0], [0, n - 7]];
    for (const [fx, fy] of spots) {
        const dx = x - fx;
        const dy = y - fy;
        if (dx >= -1 && dx <= 7 && dy >= -1 && dy <= 7) {
            const d = Math.max(Math.abs(dx - 3), Math.abs(dy - 3));
            return d === 3 || d <= 1;
        }
    }
    return null;
}

document.querySelectorAll('.qr').forEach(svg => {
    const n = Number(svg.dataset.size);
    let seed = Number(svg.dataset.seed);
    let d = '';
    for (let y = 0; y < n; y++) {
        for (let x = 0; x < n; x++) {
            seed = (seed * 48271) % 2147483647;
            const f = finder(x, y, n);
            if (f === null ? seed / 2147483647 < 0.52 : f) {
                d += `M${x} ${y}h1v1h-1z`;
            }
        }
    }
    svg.setAttribute('viewBox', `0 0 ${n} ${n}`);
    svg.innerHTML = `<path d="${d}" shape-rendering="crispEdges"/>`;
});
```
